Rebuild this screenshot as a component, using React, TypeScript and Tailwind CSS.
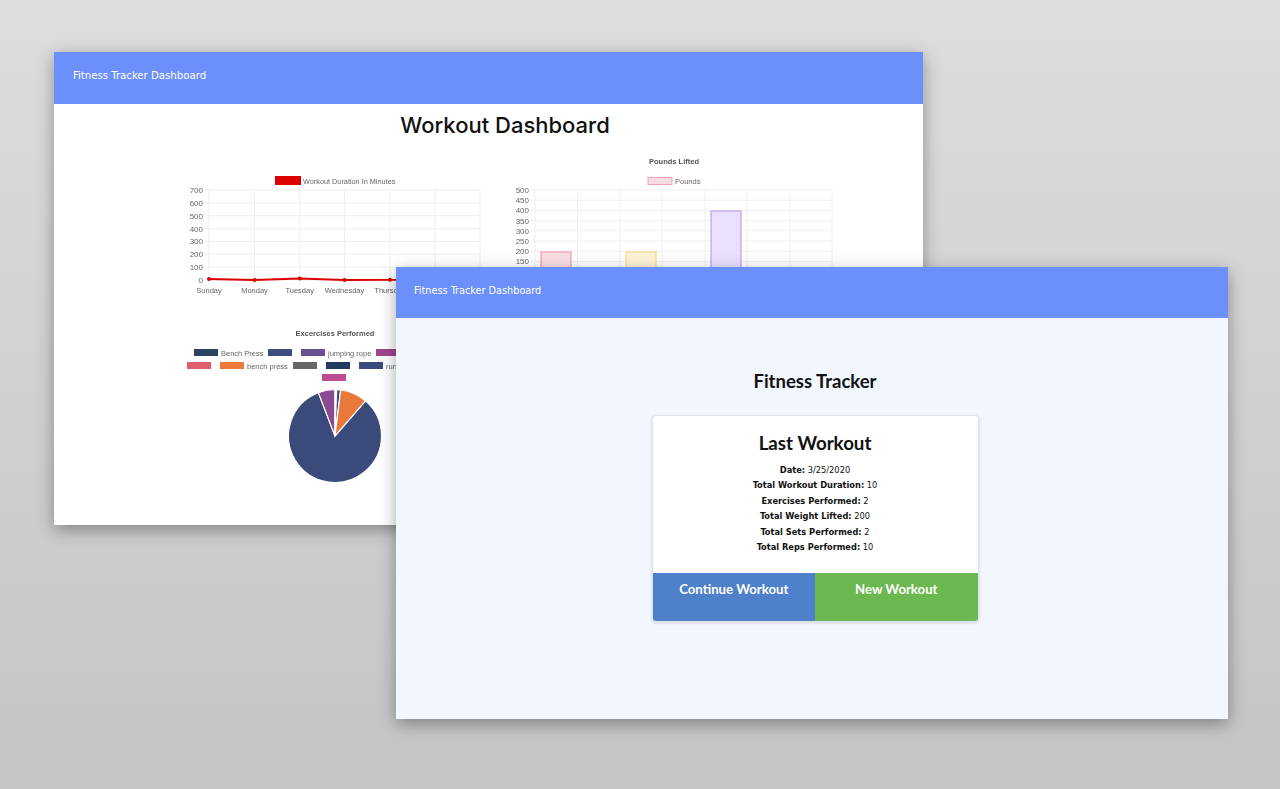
import React from "react";

const sans = "'Liberation Sans', Arial, sans-serif";
const condensed = "'DejaVu Sans Condensed', 'Open Sans', sans-serif";

const days = ["Sunday", "Monday", "Tuesday", "Wednesday", "Thursday", "Friday", "Saturday"];

function LineChart() {
  const xs = [39, 84.5, 129.7, 174.5, 220, 265, 310];
  const ticks = [700, 600, 500, 400, 300, 200, 100, 0];
  const pts = [
    [39, 129],
    [84.5, 130],
    [129.7, 128.5],
    [174.5, 130],
    [220, 129.8],
    [265, 130],
    [310, 130],
  ];
  return (
    <svg width="320" height="150" viewBox="0 0 320 150" className="blur-[0.3px] shrink-0" fontFamily={sans}>
      <rect x="105" y="26" width="26" height="9" fill="#dd0000" />
      <text x="133" y="33.5" fontSize="7.3" fill="#666">Workout Duration In Minutes</text>
      {ticks.map((t, i) => (
        <g key={t}>
          <line x1="35" x2="310" y1={40 + i * 12.86} y2={40 + i * 12.86} stroke="#eeeef1" strokeWidth="1" />
          <text x="33" y={43 + i * 12.86} fontSize="8" fill="#666" textAnchor="end">{t}</text>
        </g>
      ))}
      {xs.map((x) => (
        <line key={x} x1={x} x2={x} y1="40" y2="134" stroke="#eeeef3" strokeWidth="1" />
      ))}
      {days.map((d, i) => (
        <text key={d} x={xs[i]} y="142.5" fontSize="7.5" fill="#666" textAnchor="middle">{d}</text>
      ))}
      <polyline points={pts.map((p) => p.join(",")).join(" ")} fill="none" stroke="#dd0000" strokeWidth="1.8" />
      {pts.map((p) => (
        <circle key={p[0]} cx={p[0]} cy={p[1]} r="2" fill="#dd0000" />
      ))}
    </svg>
  );
}

function BarChart() {
  const ticks = [500, 450, 400, 350, 300, 250, 200, 150, 100, 50, 0];
  const xs = [45, 87.5, 130, 172, 215, 257, 300, 342];
  const bars = [
    { x: 51, y: 102, fill: "#f9dde3", stroke: "#f0a3b4" },
    { x: 136, y: 102, fill: "#fdf3d8", stroke: "#f6dc94" },
    { x: 221, y: 61, fill: "#e9e0fd", stroke: "#bda6f5" },
  ];
  return (
    <svg width="350" height="150" viewBox="0 0 350 150" className="blur-[0.3px] shrink-0" fontFamily={sans}>
      <text x="184" y="13.5" fontSize="7.5" fontWeight="700" fill="#555" textAnchor="middle">Pounds Lifted</text>
      <rect x="158" y="27.5" width="24" height="7" fill="#f9dde3" stroke="#f0a3b4" />
      <text x="185" y="33.5" fontSize="7.5" fill="#666">Pounds</text>
      {ticks.map((t, i) => (
        <g key={t}>
          <line x1="41" x2="342" y1={40 + i * 10.2} y2={40 + i * 10.2} stroke="#f0f0f2" strokeWidth="1" />
          <text x="39" y={43 + i * 10.2} fontSize="8" fill="#666" textAnchor="end">{t}</text>
        </g>
      ))}
      {xs.map((x) => (
        <line key={x} x1={x} x2={x} y1="40" y2="146" stroke="#f0f0f2" strokeWidth="1" />
      ))}
      {bars.map((b) => (
        <rect key={b.x} x={b.x} y={b.y} width="30" height={142 - b.y} fill={b.fill} stroke={b.stroke} strokeWidth="1.3" />
      ))}
    </svg>
  );
}

function wedge(from: number, to: number) {
  const cx = 160;
  const cy = 111;
  const r = 46.5;
  const p = (a: number) => {
    const rad = (a * Math.PI) / 180;
    return `${(cx + r * Math.sin(rad)).toFixed(2)} ${(cy - r * Math.cos(rad)).toFixed(2)}`;
  };
  const large = to - from > 180 ? 1 : 0;
  return `M${cx} ${cy} L${p(from)} A${r} ${r} 0 ${large} 1 ${p(to)} Z`;
}

function PieChart() {
  const swatches = [
    { x: 19, y: 24, fill: "#2c4361" },
    { x: 93, y: 24, fill: "#3d4f80" },
    { x: 126, y: 24, fill: "#6a5192" },
    { x: 201, y: 24, fill: "#a0458f" },
    { x: 12, y: 37, fill: "#e05d6f" },
    { x: 45, y: 37, fill: "#ec7a3a" },
    { x: 118, y: 37, fill: "#666666" },
    { x: 151, y: 37, fill: "#1f3b5f" },
    { x: 184, y: 37, fill: "#3a4a7e" },
    { x: 147, y: 49, fill: "#bc4d90" },
  ];
  return (
    <svg width="320" height="165" viewBox="0 0 320 165" className="blur-[0.3px] shrink-0" fontFamily={sans}>
      <text x="160" y="10.5" fontSize="7.5" fontWeight="700" fill="#555" textAnchor="middle">Excercises Performed</text>
      {swatches.map((s) => (
        <rect key={`${s.x}-${s.y}`} x={s.x} y={s.y} width="24" height="7" fill={s.fill} />
      ))}
      <text x="46" y="30.5" fontSize="7.5" fill="#666">Bench Press</text>
      <text x="153" y="30.5" fontSize="7.5" fill="#666">jumping rope</text>
      <text x="72" y="43.5" fontSize="7.5" fill="#666">bench press</text>
      <text x="211" y="43.5" fontSize="7.5" fill="#666">running</text>
      <g stroke="#fff" strokeWidth="1.2">
        <path d={wedge(41, 339)} fill="#3a4a7a" />
        <path d={wedge(339, 360)} fill="#8c4a92" />
        <path d={wedge(0, 2)} fill="#ffffff" />
        <path d={wedge(2, 7)} fill="#3d4f80" />
        <path d={wedge(7, 41)} fill="#e8793a" />
      </g>
    </svg>
  );
}

function Stat({ label, value }: { label: string; value: string }) {
  return (
    <p className="h-[15.4px] leading-[15.4px]">
      <b className="font-bold">{label}:</b> {value}
    </p>
  );
}

export default function App() {
  return (
    <div className="relative h-[789px] w-[1280px] overflow-hidden bg-gradient-to-b from-[#dddddd] to-[#c4c4c4]">
      {/* back window */}
      <section className="absolute left-[54px] top-[52px] h-[473px] w-[869px] overflow-hidden bg-white shadow-[0_5px_16px_rgba(0,0,0,0.35)]">
        <nav className="flex h-[52px] items-center bg-[#6b8ffb] pb-[3px] pl-[19px] text-[11.3px] text-white" style={{ fontFamily: condensed }}>
          Fitness Tracker Dashboard
        </nav>
        <h1 className="flex h-[46px] items-center justify-center pb-[4px] pl-[33px] text-[22px] font-medium text-[#111]" style={{ fontFamily: "Inter, sans-serif" }}>
          Workout Dashboard
        </h1>
        <div className="ml-[116px] flex">
          <LineChart />
          <BarChart />
        </div>
        <div className="ml-[121px] mt-[25px]">
          <PieChart />
        </div>
      </section>

      {/* front window */}
      <section className="absolute left-[396px] top-[267px] flex h-[452px] w-[832px] flex-col bg-[#f2f6fe] shadow-[0_5px_16px_rgba(0,0,0,0.35)]">
        <nav className="flex h-[51px] items-center bg-[#6b8ffb] pb-[2px] pl-[18px] text-[10.8px] text-white" style={{ fontFamily: condensed }}>
          Fitness Tracker Dashboard
        </nav>
        <div className="flex flex-1 flex-col items-center pl-[6px]" style={{ fontFamily: "Lato, sans-serif" }}>
          <h2 className="mt-[51px] h-[24px] text-[18.5px] font-bold leading-[24px] text-[#111]">Fitness Tracker</h2>
          <div className="mt-[22px] flex h-[207px] w-[327px] flex-col overflow-hidden rounded-[4px] border border-[#dfe3ea] bg-white shadow-[0_1px_3px_rgba(0,0,0,0.15)]">
            <h3 className="mt-[14px] h-[26px] text-center text-[18.7px] font-bold leading-[26px] text-[#111]">Last Workout</h3>
            <div className="mt-[6px] text-center text-[9.2px] text-[#111]" style={{ fontFamily: condensed }}>
              <Stat label="Date" value="3/25/2020" />
              <Stat label="Total Workout Duration" value="10" />
              <Stat label="Exercises Performed" value="2" />
              <Stat label="Total Weight Lifted" value="200" />
              <Stat label="Total Sets Performed" value="2" />
              <Stat label="Total Reps Performed" value="10" />
            </div>
            <div className="mt-auto flex h-[48px] text-[13.2px] font-bold text-white">
              <div className="flex flex-1 items-center justify-center bg-[#4f80ca] pb-[14px]">Continue Workout</div>
              <div className="flex flex-1 items-center justify-center bg-[#6ab84f] pb-[14px]">New Workout</div>
            </div>
          </div>
        </div>
      </section>
    </div>
  );
}
